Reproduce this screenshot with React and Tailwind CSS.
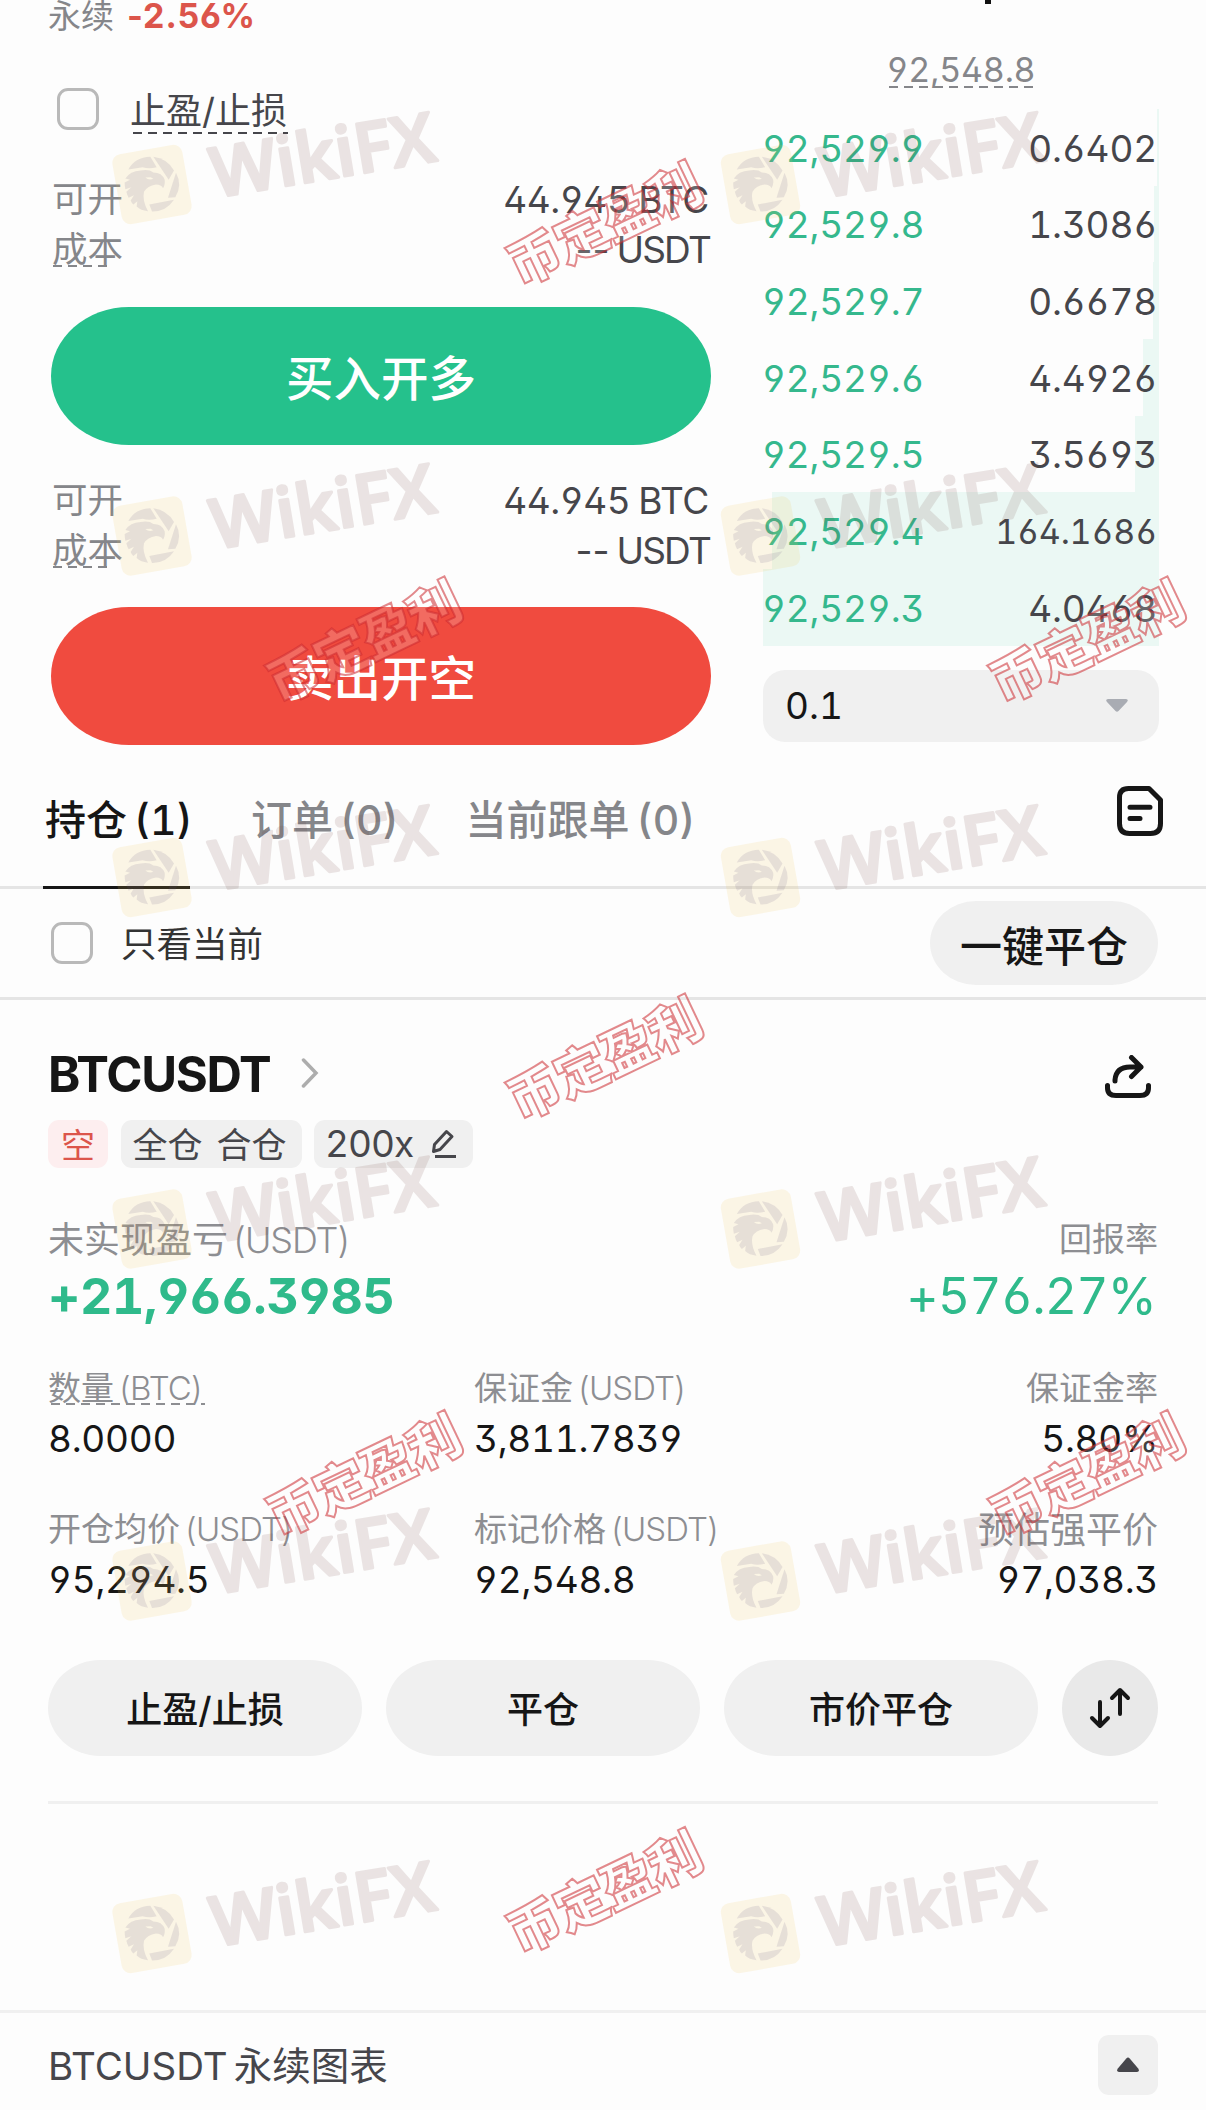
import React from "react";

const bids = [
  { price: "92,529.9", size: "0.6402", bar: 2 },
  { price: "92,529.8", size: "1.3086", bar: 5 },
  { price: "92,529.7", size: "0.6678", bar: 6 },
  { price: "92,529.6", size: "4.4926", bar: 16 },
  { price: "92,529.5", size: "3.5693", bar: 24 },
  { price: "92,529.4", size: "164.1686", bar: 387, small: true },
  { price: "92,529.3", size: "4.0468", bar: 396 },
];

const logoMarks = [184.5, 536, 877.5, 1229, 1581, 1933.5].flatMap((y) => [
  [152, y],
  [760.5, y],
]);

const stampMarks = [
  [605, 222],
  [364.5, 639.5],
  [1087.5, 639.5],
  [605, 1056.5],
  [364.5, 1473],
  [1087.5, 1473],
  [605, 1890],
];

function Dashes({ className }) {
  return (
    <svg className={className} height="2" aria-hidden="true">
      <line x1="0" y1="1" x2="100%" y2="1" stroke="currentColor" strokeWidth="2" strokeDasharray="9 6" />
    </svg>
  );
}

function Checkbox() {
  return <span className="block h-[42px] w-[42px] shrink-0 rounded-[11px] border-[3px] border-[#b9b9b9]" />;
}

function Available() {
  return (
    <div className="pl-[1px] pr-[2px] text-[#46464b]">
      <div className="flex h-[50px] items-center justify-between">
        <span className="text-[35.500px] text-[#85868a]">可开</span>
        <span className="flex gap-[8px] text-[37px]">
          <span className="tracking-[-0.500px]">44.945</span>
          <span className="tracking-[-0.400px]">BTC</span>
        </span>
      </div>
      <div className="flex h-[50px] items-center justify-between">
        <span className="relative text-[35.500px] text-[#85868a]">
          成本
          <Dashes className="absolute left-px top-[42px] w-[57px]" />
        </span>
        <span className="flex gap-[7px] text-[37px]">
          <span className="[font-feature-settings:'ss01']">--</span>
          <span className="-mr-px tracking-[-1.800px]">USDT</span>
        </span>
      </div>
    </div>
  );
}

function OrderForm() {
  return (
    <div className="w-[711px] pl-[51px]">
      <div className="-ml-[3px] flex h-[32px] items-center gap-[13px] leading-[32px]">
        <span className="text-[33px] text-[#85868a]">永续</span>
        <span className="text-[34px] font-bold tracking-[0.900px] text-[#dc554b] [font-feature-settings:'ss01']">-2.56%</span>
      </div>
      <div className="mt-[56px] flex h-[42px] items-center gap-[31px] pl-[6px]">
        <Checkbox />
        <span className="relative pt-[4px] text-[36px] text-[#46464b]">
          止盈/止损
          <Dashes className="absolute bottom-[4px] left-[3px] w-[155px]" />
        </span>
      </div>
      <div className="mt-[45px]">
        <Available />
      </div>
      <button className="mt-[32px] block h-[138px] w-full rounded-[78px/69px] bg-[#25c18c] pt-[6px] text-[47.500px] font-medium text-white">
        买入开多
      </button>
      <div className="mt-[31px]">
        <Available />
      </div>
      <button className="mt-[31px] block h-[138px] w-full rounded-[78px/69px] bg-[#f04b3f] pt-[6px] text-[47.500px] font-medium text-white">
        卖出开空
      </button>
    </div>
  );
}

function OrderBook() {
  return (
    <div className="ml-[52px] w-[396px]">
      <div className="ml-[222px] h-[4px] w-[6px] bg-[#111111]" />
      <div className="mt-[46px] flex h-[40px] justify-center">
        <span className="relative text-[34px] leading-[40px] tracking-[-0.200px] text-[#85868a]">
          92,548.8
          <Dashes className="absolute left-[2px] top-[36px] w-[144px]" />
        </span>
      </div>
      <div className="mt-[19px]">
        {bids.map((b) => (
          <div key={b.price} className="relative flex h-[76.7px] items-center justify-between pr-[2px] pt-[2px] text-[37px] tracking-[-0.200px]">
            <div className="absolute inset-y-0 right-0 bg-[#ebf8f4]" style={{ width: b.bar }} />
            <span className="relative -ml-px text-[#35b88d]">{b.price}</span>
            <span className={b.small ? "relative text-[34px] text-[#46464b]" : "relative text-[#46464b]"}>{b.size}</span>
          </div>
        ))}
      </div>
      <div className="mt-[24px] flex h-[72px] items-center justify-between rounded-[22px] bg-[#f0f0f0] pl-[22px] pr-[31px]">
        <span className="text-[37px] text-[#161616]">0.1</span>
        <svg width="22" height="13" viewBox="0 0 22 13" fill="#a9acb3">
          <path d="M2 0h18q3 0.500 1 3l-8.500 9q-1.500 1.600-3 0L1 3q-2-2.500 1-3z" />
        </svg>
      </div>
    </div>
  );
}

function Tabs() {
  return (
    <div className="flex h-[144px] border-b-[3px] border-[#e5e5e5] pl-[43px] pr-[43px] text-[41px] font-medium text-[#85868a]">
      <div className="z-10 -mb-[3px] flex w-[147px] items-center gap-[7px] border-b-[3px] border-[#161616] pl-[2px] pt-[11px] text-[#161616]">
        <span>持仓</span>
        <span>(1)</span>
      </div>
      <div className="ml-[61px] flex items-center gap-[7px] pt-[11px]">
        <span>订单</span>
        <span>(0)</span>
      </div>
      <div className="ml-[67px] flex items-center gap-[7px] pt-[11px]">
        <span>当前跟单</span>
        <span>(0)</span>
      </div>
      <svg className="ml-auto mt-[41px]" width="46" height="50" viewBox="0 0 46 50" fill="none" stroke="#161616" strokeWidth="5" strokeLinecap="round" strokeLinejoin="round">
        <path d="M11.500 2.500H32L43.500 14V37.500Q43.500 47.500 33.500 47.500H12.500Q2.500 47.500 2.500 37.500V11.500Q2.500 2.500 11.500 2.500Z" />
        <path d="M13 21.300H33M13 32.500H23" />
      </svg>
    </div>
  );
}

function FilterBar() {
  return (
    <div className="flex h-[111px] items-center border-b-[3px] border-[#e5e5e5] pl-[51px] pr-[48px]">
      <Checkbox />
      <span className="ml-[28px] pt-[4px] text-[35.500px] text-[#333333]">只看当前</span>
      <button className="ml-auto h-[84px] w-[228px] rounded-[46px/42px] bg-[#f0f0f0] pt-[6px] text-[42px] font-medium text-[#161616]">
        一键平仓
      </button>
    </div>
  );
}

function Cell({ cn, unit, value, dashed, className }) {
  return (
    <div className={className}>
      <div className="relative flex h-[44px] items-center gap-[4px] pt-[3px] text-[33px] text-[#8d8e92]">
        <span>{cn}</span>
        {unit && <span className="font-light tracking-[-0.900px]">{unit}</span>}
        {dashed && <Dashes className="absolute left-[3px] top-[38px] w-[154px]" />}
      </div>
      <div className="mt-[8px] h-[44px] text-[37px] leading-[44px] tracking-[-0.300px] text-[#161616]">{value}</div>
    </div>
  );
}

function Position() {
  return (
    <section className="px-[48px]">
      <div className="flex h-[120px] items-center pt-[30px]">
        <h2 className="text-[49px] font-bold tracking-[-1.300px] text-[#161616]">BTCUSDT</h2>
        <svg className="ml-[31px] -mt-[4px]" width="18" height="30" viewBox="0 0 18 30" fill="none" stroke="#adadad" strokeWidth="3.500" strokeLinecap="round">
          <path d="M2.500 2L15 15 2.500 28" />
        </svg>
        <svg className="ml-auto mr-[7px] mt-[3px]" width="46" height="44" viewBox="0 0 46 44" fill="none" stroke="#161616" strokeWidth="5" strokeLinecap="round" strokeLinejoin="round">
          <path d="M2.500 30.500V33Q2.500 40.500 11 40.500H35Q43.500 40.500 43.500 33V30.500" />
          <path d="M10 26V25Q11 12 25 12H36M26.500 2.500L36 12 26.500 21.500" />
        </svg>
      </div>
      <div className="flex h-[48px] gap-[12.500px] text-[35px] text-[#46464b]">
        <span className="flex w-[60px] items-center justify-center rounded-[11px] bg-[#fdeeef] pt-[3px] text-[34px] text-[#dc554b]">空</span>
        <span className="flex w-[181px] items-center gap-[14px] rounded-[11px] bg-[#f0f0f0] pl-[12px] pt-[3px]">
          <span>全仓</span>
          <span>合仓</span>
        </span>
        <span className="flex w-[159px] items-center rounded-[11px] bg-[#f0f0f0] pl-[11px] text-[37px]">
          <span className="tracking-[-1px]">200x</span>
          <svg className="ml-[18px]" width="26" height="30" viewBox="0 0 26 30" fill="none" stroke="#46464b" strokeWidth="3" strokeLinejoin="round">
            <path d="M2.500 22.500L3.500 15.500 15.500 2.500 21 7.500 9 20.500Z" />
            <path d="M4 27.500H25" />
          </svg>
        </span>
      </div>

      <div className="mt-[48px] flex h-[44px] items-center justify-between pt-[3px] text-[#8d8e92]">
        <span className="flex h-[44px] items-center gap-[4px] text-[36px]">
          <span>未实现盈亏</span>
          <span className="font-light tracking-[-1.100px]">(USDT)</span>
        </span>
        <span className="text-[33px]">回报率</span>
      </div>
      <div className="mt-[6px] flex h-[60px] items-center justify-between text-[50px] text-[#2fba8b]">
        <span className="font-bold tracking-[-0.300px]">+21,966.3985</span>
        <span className="mr-[2px] tracking-[-0.900px]">+576.27%</span>
      </div>

      <div className="mt-[39px] flex">
        <Cell className="w-[426px]" cn="数量" unit="(BTC)" value="8.0000" dashed />
        <Cell cn="保证金" unit="(USDT)" value="3,811.7839" />
        <Cell className="ml-auto flex flex-col items-end" cn="保证金率" value="5.80%" />
      </div>
      <div className="mt-[45px] flex">
        <Cell className="w-[426px]" cn="开仓均价" unit="(USDT)" value="95,294.5" />
        <Cell cn="标记价格" unit="(USDT)" value="92,548.8" />
        <Cell className="ml-auto flex flex-col items-end" cn={<span className="text-[36px]">预估强平价</span>} value="97,038.3" />
      </div>

      <div className="mt-[58px] flex gap-[24px] text-[36px] font-medium text-[#161616]">
        <button className="h-[96px] flex-1 rounded-[52px/48px] bg-[#f0f0f0] pt-[4px]">止盈/止损</button>
        <button className="h-[96px] flex-1 rounded-[52px/48px] bg-[#f0f0f0] pt-[4px]">平仓</button>
        <button className="h-[96px] flex-1 rounded-[52px/48px] bg-[#f0f0f0] pt-[4px]">市价平仓</button>
        <button className="flex h-[96px] w-[96px] items-center justify-center rounded-full bg-[#e9e9e9]">
          <svg width="42" height="42" viewBox="0 0 42 42" fill="none" stroke="#161616" strokeWidth="4" strokeLinecap="round" strokeLinejoin="round">
            <path d="M11 15V38M3 31L11 39 19 31" />
            <path d="M31 27V4M23 11L31 3 39 11" />
          </svg>
        </button>
      </div>
      <div className="mt-[45px] h-[3px] bg-[#f0f0f0]" />
    </section>
  );
}

function ChartBar() {
  return (
    <footer className="mt-[206px] flex h-[100px] items-center border-t-[3px] border-[#f0f0f0] pl-[48px] pr-[48px] pt-[6px] text-[38.500px] text-[#46464b]">
      <span className="pt-[4px]">BTCUSDT</span>
      <span className="ml-[6px] pt-[4px]">永续图表</span>
      <span className="ml-auto flex h-[60px] w-[60px] items-center justify-center rounded-[11px] bg-[#f0f0f0]">
        <svg width="22" height="15" viewBox="0 0 22 15" fill="#46464b">
          <path d="M2 15h18q3-0.500 1.200-3.500l-8.500-10q-1.700-1.800-3.400 0L0.800 11.500Q-1 14.500 2 15z" />
        </svg>
      </span>
    </footer>
  );
}

// Tilted brand marks and red stamps laid over the whole page
function Watermarks() {
  return (
    <svg className="pointer-events-none absolute inset-0 z-20" width="1206" height="2110" viewBox="0 0 1206 2110">
      <defs>
        <g id="wiki">
          <rect x="-35.500" y="-35.500" width="71" height="71" rx="9" transform="rotate(-10)" fill="#f3c555" fillOpacity="0.140" />
          <g fill="#5b4a78" fillOpacity="0.130" transform="scale(0.3333)">
            <path d="M-71-45Q-50-82-5-83L14-52Q-10-46-28-52Z" />
            <path d="M4-83Q45-78 66-42L50-14Z" />
            <path d="M72-35Q92 2 70 38L48 40Z" />
            <path d="M66 46Q42 82 0 81L-8 60Z" />
            <path fillRule="evenodd" d="M-80-18Q-66-40-34-42Q-8-46 4-36Q30-36 38-14Q40 2 33 11Q28 0 12 0Q-14 4-24 22Q-30 48-12 80Q-34 78-46 66L-44 50 -56 60Q-62 54-64 48L-54 32 -70 40Q-74 34-77 22L-62 8 -80 14Q-82 4-82-6L-66-14ZM-20-21Q-10-12 4-17L-4-22Z" />
          </g>
          <text x="60" y="23.500" transform="rotate(-9.500)" textLength="226" lengthAdjust="spacingAndGlyphs" className="font-['Open_Sans'] text-[69px] font-semibold" fill="#70403a" stroke="#70403a" strokeWidth="3" strokeLinejoin="round" opacity="0.130">
            WikiFX
          </text>
        </g>
        <g id="stamp" transform="translate(0 3) rotate(-25.500)">
          <text textAnchor="middle" y="19" textLength="208" className="font-['Noto_Sans_CJK_SC'] text-[53px] font-black" fill="#ffffff" fillOpacity="0.180" stroke="#cc2a30" strokeOpacity="0.550" strokeWidth="2">
            币定盈利
          </text>
        </g>
      </defs>
      {logoMarks.map(([x, y]) => (
        <use key={`${x}-${y}`} href="#wiki" x={x} y={y} />
      ))}
      {stampMarks.map(([x, y]) => (
        <use key={`${x}-${y}`} href="#stamp" x={x} y={y} />
      ))}
    </svg>
  );
}

export default function App() {
  return (
    <main className="relative h-[2110px] w-[1206px] overflow-hidden whitespace-nowrap bg-[#fdfdfd] font-['Inter','Noto_Sans_CJK_SC',sans-serif] [font-feature-settings:'ss01','tnum']">
      <div className="flex h-[745px]">
        <OrderForm />
        <OrderBook />
      </div>
      <Tabs />
      <FilterBar />
      <Position />
      <ChartBar />
      <Watermarks />
    </main>
  );
}
